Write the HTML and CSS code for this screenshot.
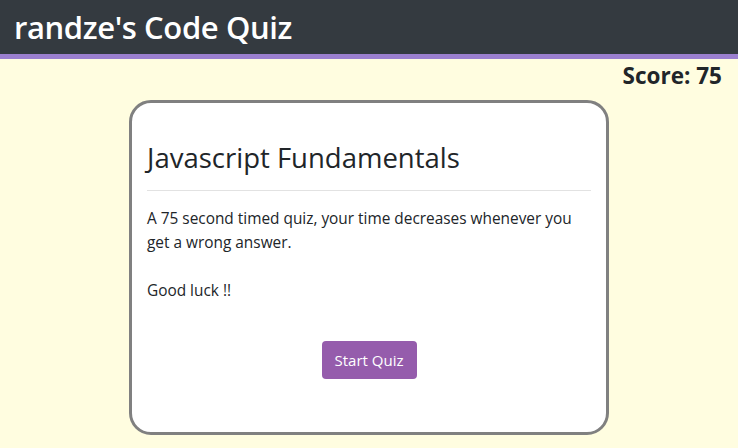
FILE: index.html
```html
<!DOCTYPE html>
<html>
<head>
<meta charset="utf-8">
<link rel="stylesheet" href="styles.css">
</head>
<body>
<header class="topbar"><h1 class="brand">randze's Code Quiz</h1></header>
<div class="score-row"><span class="score">Score: 75</span></div>
<main class="card">
  <h2 class="card-title">Javascript Fundamentals</h2>
  <hr class="divider">
  <p class="desc">A 75 second timed quiz, your time decreases whenever you get a wrong answer.</p>
  <p class="desc">Good luck !!</p>
  <div class="actions"><button class="btn">Start Quiz</button></div>
</main>
</body>
</html>
```
FILE: styles.css
```css
* { box-sizing: border-box; }
body {
  margin: 0;
  background: #fffde0;
  font-family: "Open Sans", "Noto Sans", sans-serif;
  color: #212529;
}
.topbar {
  background: #343a40;
  height: 59px;
  border-bottom: 5px solid #9b7fcf;
  display: flex;
  align-items: center;
  padding: 0 14px;
}
.brand {
  margin: 0;
  color: #fff;
  font-size: 31px;
  font-weight: 600;
  letter-spacing: -0.4px;
}
.score-row {
  display: flex;
  justify-content: flex-end;
  padding: 1px 16px 0 0;
  height: 41px;
}
.score {
  font-size: 22.5px;
  font-weight: 700;
  color: #212529;
}
.card {
  width: 480px;
  margin: 0 0 0 129px;
  background: #fff;
  border: 3px solid #808080;
  border-radius: 22px;
  padding: 37px 15px 53px;
}
.card-title {
  margin: 0;
  font-size: 27.5px;
  font-weight: 500;
  line-height: 1.3;
}
.divider {
  border: 0;
  border-top: 1px solid #e2e2e2;
  margin: 14px 0 16px;
}
.desc {
  margin: 0 0 25px;
  font-size: 15.4px;
  line-height: 24px;
}
.desc + .desc {
  margin-top: -1px;
}
.actions {
  display: flex;
  justify-content: center;
  margin-top: 38px;
}
.btn {
  background: #955cac;
  color: #fff;
  border: 0;
  border-radius: 4px;
  font-family: inherit;
  font-size: 15px;
  width: 95px;
  height: 38px;
}
```
